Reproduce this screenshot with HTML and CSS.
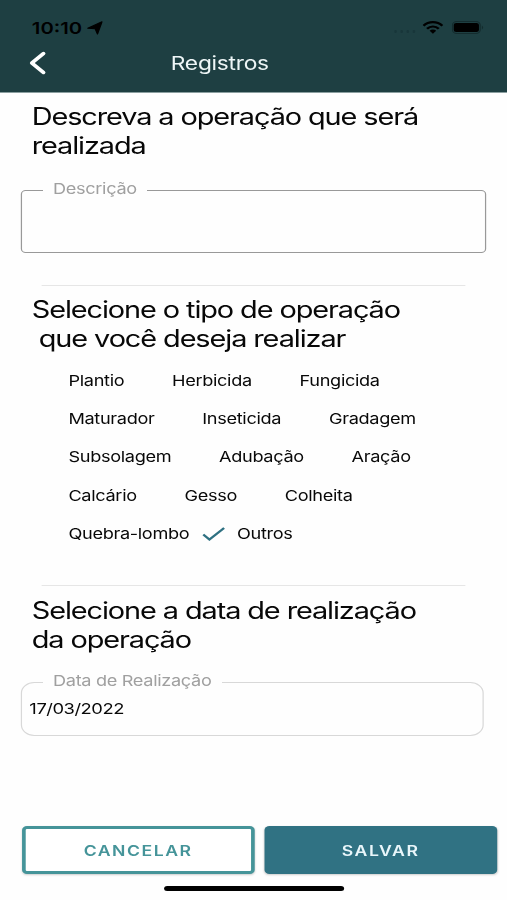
FILE: index.html
```html
<!DOCTYPE html>
<html lang="pt-BR">
<head>
<meta charset="utf-8">
<title>Registros</title>
<link rel="stylesheet" href="styles.css">
</head>
<body>
<div class="app">
  <header class="header">
    <div class="status">
      <span class="time">10:10</span>
      <svg class="location" width="13" height="14" viewBox="0 0 13 14"><path d="M12.300.8 8.600 13 6.700 7.800.7 7.200Z" stroke="#000" stroke-linejoin="round"/></svg>
      <span class="cell"><i></i><i></i><i></i><i></i></span>
      <svg class="wifi" width="17" height="13" viewBox="0 0 17 13"><g fill="none" stroke="#000" stroke-width="2.1"><path d="M.8 4.8C5-.1 12-.1 16.200 4.800"/><path d="M3.700 7.700c2.700-2.900 6.900-2.900 9.600 0"/></g><path d="M5.800 9.700c1.500-1.500 3.900-1.500 5.400 0L8.500 12.700Z"/></svg>
      <svg class="battery" width="26" height="13" viewBox="0 0 26 13"><rect x=".5" y=".5" width="22.600" height="12" rx="3.500" fill="none" stroke="#142c2e"/><rect x="1.500" y="2" width="20.600" height="9" rx="2"/><path d="M24.500 4.500q2 2 0 4Z" fill="#142c2e"/></svg>
    </div>
    <nav class="navbar">
      <svg class="back" width="14" height="24" viewBox="0 0 14 24"><path d="M11.500 2.500 2 12 11.500 21.500" fill="none" stroke="#fff" stroke-width="3.200" stroke-linecap="round" stroke-linejoin="round"/></svg>
      <h1 class="title">Registros</h1>
    </nav>
  </header>
  <main class="content">
    <h2 class="heading">Descreva a operação que será<br>realizada</h2>
    <fieldset class="field field-text">
      <legend><span>Descrição</span></legend>
    </fieldset>
    <hr class="divider">
    <h2 class="heading heading-type">Selecione o tipo de operação<br>&nbsp;que você deseja realizar</h2>
    <div class="options">
      <div class="row"><span>Plantio</span><span>Herbicida</span><span>Fungicida</span></div>
      <div class="row"><span>Maturador</span><span>Inseticida</span><span>Gradagem</span></div>
      <div class="row"><span>Subsolagem</span><span>Adubação</span><span>Aração</span></div>
      <div class="row"><span>Calcário</span><span>Gesso</span><span>Colheita</span></div>
      <div class="row"><span>Quebra-lombo</span><svg class="check" width="19" height="16" viewBox="0 0 19 16"><path d="M1 8.500 6 13.500 18 2" fill="none" stroke="#2f7182" stroke-width="2"/></svg><span>Outros</span></div>
    </div>
    <hr class="divider">
    <h2 class="heading heading-date">Selecione a data de realização<br>da operação</h2>
    <fieldset class="field field-date">
      <legend><span>Data de Realização</span></legend>
      <span class="date">17/03/2022</span>
    </fieldset>
  </main>
  <footer class="actions">
    <button class="btn cancel">CANCELAR</button>
    <button class="btn save">SALVAR</button>
  </footer>
  <div class="home"></div>
</div>
</body>
</html>
```
FILE: styles.css
```css
* { box-sizing: border-box; }
html, body { margin: 0; width: 507px; height: 900px; overflow: hidden; background: #fefefe; }
.app {
  display: flex;
  flex-direction: column;
  width: 414px;
  height: 900px;
  transform: scaleX(1.22464);
  transform-origin: 0 0;
  font-family: Inter, "Liberation Sans", sans-serif;
  color: #080808;
}
.header { height: 93px; background: #1e3f42; border-bottom: 1px solid #8b9fa0; }
.status { display: flex; align-items: center; height: 41px; padding: 14px 19px 0 26px; color: #000; }
.time { width: 45px; font-size: 16.500px; font-weight: 600; }
.cell { display: flex; gap: 2.500px; margin: 8px 6px 0 auto; }
.cell i { width: 2.500px; height: 2.500px; border-radius: 50%; background: #18363a; }
.wifi { margin-right: 7px; }
.navbar { display: flex; align-items: center; height: 44px; padding-left: 23.500px; }
.title { width: 338px; margin: 0; padding-right: 54px; text-align: center; font-size: 18.600px; font-weight: 400; letter-spacing: -.22px; color: #eef6f7; }
.content { height: 733px; padding: 9px 17.300px 0; }
.heading { margin: 0 0 0 8.600px; font-size: 23.600px; line-height: 29.400px; font-weight: 400; white-space: nowrap; letter-spacing: -.9px; }
.field { margin: 0; padding: 0; min-width: 0; border: 1.500px solid #999; }
.field legend { height: 20px; line-height: 20px; margin-left: 16.500px; padding: 0 8.500px; font-size: 14.800px; color: #a0a0a0; letter-spacing: -.26px; }
.field legend span { position: relative; top: -2px; }
.field-text { width: 380px; height: 72px; margin-top: 20px; border-radius: 4px; }
.field-date { width: 377.500px; height: 64px; margin-top: 18px; border-color: #d8d8d8; border-radius: 11px; }
.field-date legend span { top: -1px; }
.date { display: block; padding-left: 5.700px; font-size: 15px; line-height: 33px; letter-spacing: -.38px; }
.divider { width: 346px; height: 1px; margin: 32px 0 0 16.700px; border: 0; background: #e6e6e6; }
.heading-type { margin-top: 9px; }
.options { margin-left: 38.600px; padding-top: 8px; }
.row { display: flex; align-items: center; height: 38.300px; gap: 39px; font-size: 14.800px; letter-spacing: -.26px; }
.check { margin: 0 -29px; }
.heading-date { margin-top: 9.500px; }
.actions { display: flex; gap: 8px; height: 48px; padding-left: 17.800px; }
.btn { width: 190px; height: 48px; border-radius: 4px; padding: 0; font: 600 14.400px Inter, sans-serif; letter-spacing: 1.250px; box-shadow: 0 1px 2px #0003; }
.cancel { border: 3px solid #459499; background: #fff; color: #459499; }
.save { border: 0; background: #307283; color: #e9f6fa; }
.home { width: 147px; height: 5px; margin: 12px 0 0 134px; border-radius: 3px; background: #000; }
```
